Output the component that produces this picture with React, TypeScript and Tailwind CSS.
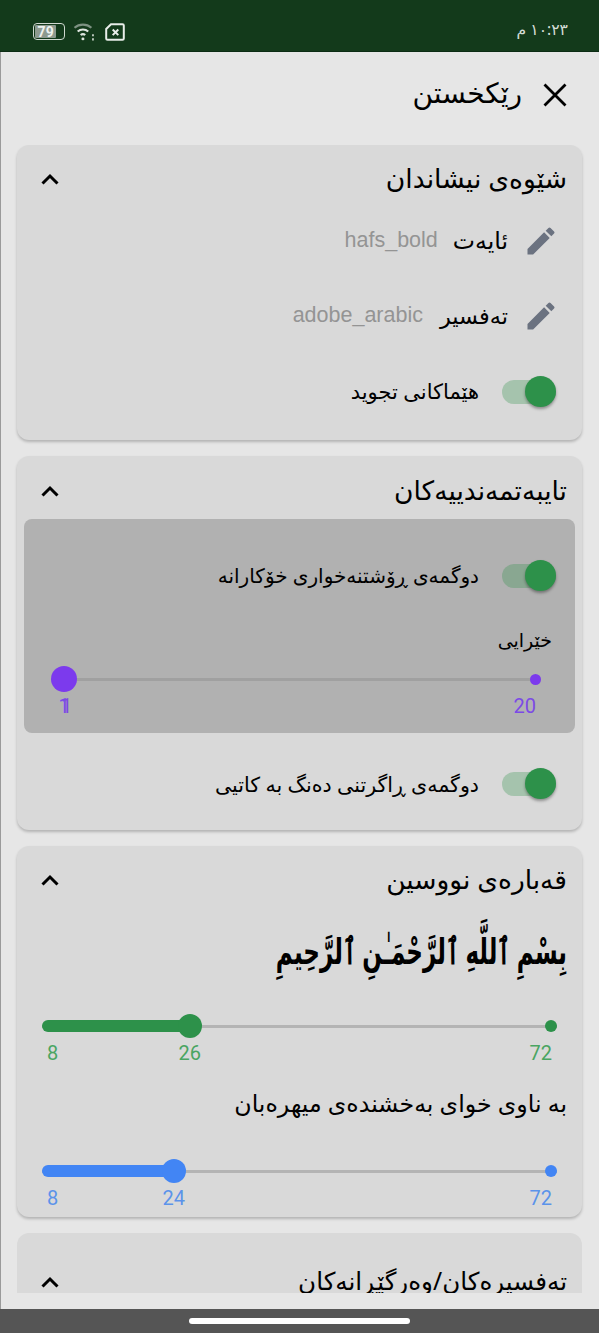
import React from "react";

const arabic = "font-['Noto_Sans','DejaVu_Sans',sans-serif]";

function Pencil() {
  return (
    <svg viewBox="0 0 24 24" className="h-[36px] w-[36px] fill-[#6b7280] shrink-0">
      <path d="M3 17.25V21h3.75L17.81 9.94l-3.75-3.75L3 17.25zM20.71 7.04a1 1 0 0 0 0-1.41l-2.34-2.34a1 1 0 0 0-1.41 0l-1.83 1.83 3.75 3.75 1.83-1.83z" />
    </svg>
  );
}

function Chevron() {
  return (
    <svg viewBox="0 0 18 12" className="mt-[2px] h-[12px] w-[18px] shrink-0 fill-none stroke-black stroke-[3]">
      <path d="M1.5 10.5 9 3l7.5 7.5" />
    </svg>
  );
}

function Toggle() {
  return (
    <div className="relative h-[24px] w-[54px] shrink-0 rounded-full bg-[#2d9249]/30">
      <div className="absolute left-[23px] top-[-4px] h-[31px] w-[31px] rounded-full bg-[#2d914a] shadow-[0_2px_3px_rgba(0,0,0,0.35)]" />
    </div>
  );
}

function CardHead({ title, size }: { title: string; size: string }) {
  return (
    <div className="flex items-center justify-between pl-[9px]">
      <span className={`leading-[36px] text-black ${size}`}>{title}</span>
      <Chevron />
    </div>
  );
}

function EditRow({ label, value, labelSize, valueGap }: { label: string; value: string; labelSize: string; valueGap: string }) {
  return (
    <div className="flex h-[75px] items-center pr-[8px]">
      <Pencil />
      <span className={`mr-[15px] text-black ${labelSize}`}>{label}</span>
      <span className={`font-['Liberation_Sans',sans-serif] text-[21.5px] text-[#949494] ${valueGap}`}>{value}</span>
    </div>
  );
}

function ToggleRow({ label, size }: { label: string; size: string }) {
  return (
    <div className="flex items-center gap-[23px]">
      <Toggle />
      <span className={`text-black ${size}`}>{label}</span>
    </div>
  );
}

function Slider(props: {
  min: string;
  max: string;
  value: string;
  pct: number;
  labelClass: string;
  track: string;
  fill: string;
  thumb: string;
  dot: string;
  minClass: string;
}) {
  const { min, max, value, pct, labelClass, track, fill, thumb, dot, minClass } = props;
  return (
    <div dir="ltr" className="relative">
      <div className="relative h-[28px]">
        <div className={`absolute inset-x-0 top-[12.5px] h-[3px] ${track}`} />
        {fill && <div className={`absolute left-0 top-[8px] h-[12px] rounded-full ${fill}`} style={{ width: `${pct}%` }} />}
        <div className={`absolute -translate-x-1/2 rounded-full ${thumb}`} style={{ left: `${pct}%` }} />
        <div className={`absolute right-0 rounded-full ${dot}`} />
      </div>
      <div className={`relative h-[26px] text-[20px] leading-[26px] font-['Roboto',sans-serif] ${labelClass}`}>
        <span className={`absolute ${minClass}`}>{min}</span>
        <span className="absolute -translate-x-1/2" style={{ left: `${pct}%` }}>
          {value}
        </span>
        <span className="absolute right-[5px]">{max}</span>
      </div>
    </div>
  );
}

export default function App() {
  return (
    <div dir="rtl" className={`flex h-[1333px] w-[599px] flex-col overflow-hidden bg-[#555555] ${arabic}`}>
      <div className="flex h-[52px] shrink-0 items-end justify-between border-b border-[#0c2c14] bg-[#133a1b] pb-[10px] pl-[33px] pr-[31px]">
        <span className="text-[15.6px] leading-[24px] text-[#d5ddd6]">۱۰:۲۳ م</span>
        <div dir="ltr" className="flex items-center gap-[8px]">
          <div className="flex h-[17px] w-[32px] items-center rounded-[4px] border-[1.5px] border-[#cfd8d0] p-[1px]">
            <div className="flex h-full w-[76%] items-center justify-center rounded-[1px] bg-[#8d9a8f] font-['Roboto',sans-serif] text-[14px] font-bold leading-none text-[#eef2ef]">
              79
            </div>
          </div>
          <svg viewBox="0 0 20 18" className="h-[19px] w-[22px] fill-none stroke-[#dfe6e0] stroke-2">
            <path d="M1 5.5c4.5-4 11.5-4 16 0" className="stroke-[#7d9282]" />
            <path d="M4 9c2.8-2.5 7.2-2.5 10 0" />
            <path d="M6.8 12.3c1.3-1 3.1-1 4.4 0" />
            <circle cx="9" cy="16" r="1.4" className="fill-[#dfe6e0] stroke-none" />
            <path d="M18.5 11.5v2M18.5 15.5v2" strokeWidth="1.5" />
          </svg>
          <svg viewBox="0 0 20 18" className="h-[18px] w-[24px] fill-none stroke-[#e8ede9] stroke-2">
            <path d="M6 1.2h11.5a1.3 1.3 0 0 1 1.3 1.3v13a1.3 1.3 0 0 1-1.3 1.3h-15a1.3 1.3 0 0 1-1.3-1.3V6z" />
            <path d="m7.7 6.5 5.6 5.6m0-5.6-5.6 5.6" />
          </svg>
        </div>
      </div>

      <div className="flex h-[1257px] shrink-0 flex-col border-l border-[#9a9a9a] bg-[#e6e6e6]">
        <div className="flex h-[93px] shrink-0 items-center gap-[21px] pb-[7px] pr-[32px]">
          <svg viewBox="0 0 24 24" className="h-[24px] w-[24px] fill-none stroke-black stroke-[2.8]">
            <path d="M1.5 1.5l21 21M22.5 1.5l-21 21" />
          </svg>
          <span className="mb-[6px] text-[28px] leading-[40px] text-black">رێکخستن</span>
        </div>

        <div className="flex h-[1148px] flex-col gap-[16px] overflow-hidden pl-[16px] pr-[17px]">
          <section className="h-[295px] shrink-0 rounded-[12px] bg-[#d9d9d9] px-[15px] pt-[15px] shadow-[0_2px_3px_rgba(0,0,0,0.22)]">
            <CardHead title="شێوەی نیشاندان" size="text-[26.6px]" />
            <div className="mt-[7px]">
              <EditRow label="ئایەت" value="hafs_bold" labelSize="text-[23.6px]" valueGap="mr-[15px]" />
              <EditRow label="تەفسیر" value="adobe_arabic" labelSize="text-[22.4px]" valueGap="mr-[17px]" />
              <div className="mt-[23px] pr-[11px]">
                <ToggleRow label="هێماکانی تجوید" size="text-[21px]" />
              </div>
            </div>
          </section>

          <section className="h-[374px] shrink-0 rounded-[12px] bg-[#d9d9d9] pt-[16px] shadow-[0_2px_3px_rgba(0,0,0,0.22)]">
            <div className="px-[15px]">
              <CardHead title="تایبەتمەندییەکان" size="text-[26.5px]" />
            </div>
            <div className="mx-[7px] mt-[11px] h-[214px] rounded-[8px] bg-[#b1b1b1] px-[16px] pt-[42px]">
              <div className="pr-[3px]">
                <ToggleRow label="دوگمەی ڕۆشتنەخواری خۆکارانە" size="text-[20px]" />
              </div>
              <div className="mt-[33px] pr-[7px] text-[19px] leading-[32px] text-black">خێرایی</div>
              <div className="mt-[9px] pl-[24px] pr-[18px]">
                <Slider min="1" max="20" value="1" pct={0} labelClass="text-[#7c4ae6]" track="bg-[#a0a0a0]" fill="" thumb="top-[1px] h-[26px] w-[26px] bg-[#7c3aed]" dot="top-[8.5px] h-[11px] w-[11px] bg-[#7c3aed]" minClass="left-[-3px]" />
              </div>
            </div>
            <div className="mt-[36px] pr-[26px]">
              <ToggleRow label="دوگمەی ڕاگرتنی دەنگ بە کاتیی" size="text-[20.6px]" />
            </div>
          </section>

          <section className="h-[371px] shrink-0 rounded-[12px] bg-[#d9d9d9] px-[15px] pt-[15px] shadow-[0_2px_3px_rgba(0,0,0,0.22)]">
            <CardHead title="قەبارەی نووسین" size="text-[26.5px]" />
            <div className="mt-[22px] h-[64px] origin-right scale-x-[0.64] whitespace-nowrap text-[36px] font-bold leading-[64px] text-black">بِسْمِ ٱللَّهِ ٱلرَّحْمَـٰنِ ٱلرَّحِيمِ</div>
            <div className="mt-[29px] px-[10px]">
              <Slider min="8" max="72" value="26" pct={28.7} labelClass="text-[#4aa562]" track="bg-[#b4b4b4]" fill="bg-[#2d914a]" thumb="top-[2px] h-[24px] w-[24px] bg-[#2d914a]" dot="top-[8px] h-[12px] w-[12px] bg-[#2d914a]" minClass="left-[5px]" />
            </div>
            <div className="mt-[19px] text-[23.7px] leading-[36px] text-black">به ناوی خوای بەخشندەی میهرەبان</div>
            <div className="mt-[36px] px-[10px]">
              <Slider min="8" max="72" value="24" pct={25.6} labelClass="text-[#5b93ea]" track="bg-[#b4b4b4]" fill="bg-[#4285f4]" thumb="top-[2px] h-[24px] w-[24px] bg-[#4285f4]" dot="top-[8px] h-[12px] w-[12px] bg-[#4285f4]" minClass="left-[5px]" />
            </div>
          </section>

          <section className="h-[200px] shrink-0 rounded-[12px] bg-[#d9d9d9] px-[15px] pt-[30px]">
            <CardHead title="تەفسیرەکان/وەرگێڕانەکان" size="text-[24.6px]" />
          </section>
        </div>
      </div>

      <div className="flex flex-1 items-center justify-center">
        <div className="h-[6px] w-[221px] rounded-full bg-white" />
      </div>
    </div>
  );
}
